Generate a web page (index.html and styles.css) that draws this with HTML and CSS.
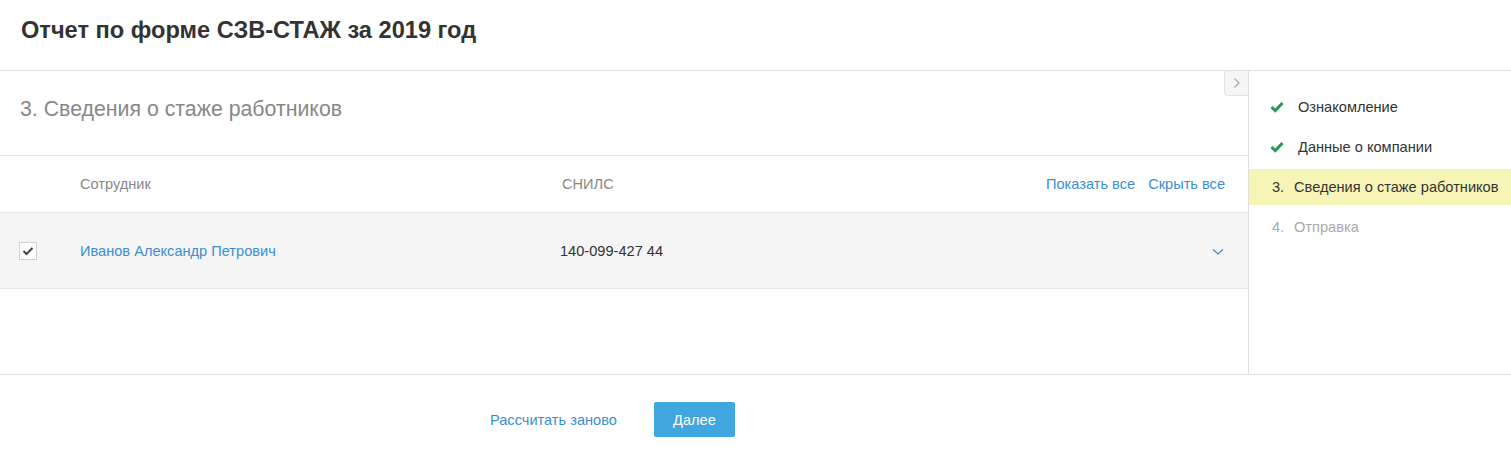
FILE: index.html
```html
<!DOCTYPE html>
<html lang="ru">
<head>
  <meta charset="UTF-8">
  <title>Отчет по форме СЗВ-СТАЖ</title>
  <link rel="stylesheet" href="styles.css">
</head>
<body>
  <header class="page-header">
    <h1>Отчет по форме СЗВ-СТАЖ за 2019 год</h1>
  </header>

  <div class="workspace">
    <main class="content">
      <button class="toggle" type="button" aria-label="Свернуть">
        <svg width="8" height="12" viewBox="0 0 8 12"><path d="M1.5 1.5 L6 6 L1.5 10.5" fill="none" stroke="#aaa" stroke-width="1.3"/></svg>
      </button>

      <h2 class="section-title">3. Сведения о стаже работников</h2>

      <div class="table-head">
        <span class="col-check"></span>
        <span class="col-name">Сотрудник</span>
        <span class="col-snils">СНИЛС</span>
        <span class="col-actions">
          <a href="#">Показать все</a>
          <a href="#">Скрыть все</a>
        </span>
      </div>

      <div class="table-row">
        <span class="col-check">
          <span class="checkbox">
            <svg width="12" height="10" viewBox="0 0 12 10"><path d="M1.5 5 L4.5 8 L10.5 2" fill="none" stroke="#444" stroke-width="2"/></svg>
          </span>
        </span>
        <span class="col-name"><a href="#">Иванов Александр Петрович</a></span>
        <span class="col-snils">140-099-427 44</span>
        <span class="col-actions">
          <svg width="12" height="8" viewBox="0 0 12 8"><path d="M1 1.5 L6 6 L11 1.5" fill="none" stroke="#3b8ed0" stroke-width="1.3"/></svg>
        </span>
      </div>
    </main>

    <aside class="steps">
      <ul>
        <li class="done">
          <svg class="mark" width="14" height="12" viewBox="0 0 14 12"><path d="M1.5 6 L5.3 9.6 L12.5 2" fill="none" stroke="#1f9a4e" stroke-width="3"/></svg>
          <span>Ознакомление</span>
        </li>
        <li class="done">
          <svg class="mark" width="14" height="12" viewBox="0 0 14 12"><path d="M1.5 6 L5.3 9.6 L12.5 2" fill="none" stroke="#1f9a4e" stroke-width="3"/></svg>
          <span>Данные о компании</span>
        </li>
        <li class="current"><span class="num">3.</span><span>Сведения о стаже работников</span></li>
        <li class="todo"><span class="num">4.</span><span>Отправка</span></li>
      </ul>
    </aside>
  </div>

  <footer class="page-footer">
    <a href="#" class="recalc">Рассчитать заново</a>
    <button type="button" class="btn-next">Далее</button>
  </footer>
</body>
</html>
```

FILE: styles.css
```css
body {
  margin: 0;
  font-family: 'Liberation Sans', Arial, sans-serif;
  font-size: 14.6px;
  color: #333;
  background: #fff;
}

a {
  color: #3b8ed0;
  text-decoration: none;
}

.page-header {
  height: 70px;
  border-bottom: 1px solid #dedede;
  display: flex;
  align-items: center;
  padding-left: 21px;
}

.page-header h1 {
  margin: 0 0 10px;
  font-size: 23.6px;
  font-weight: bold;
  color: #333;
}

.workspace {
  display: flex;
  height: 303px;
  border-bottom: 1px solid #dedede;
}

.content {
  position: relative;
  width: 1248px;
}

.toggle {
  position: absolute;
  top: 0;
  right: 0;
  width: 24px;
  height: 25px;
  padding: 0;
  border: 1px solid #e2e2e2;
  border-top: none;
  border-right: none;
  border-radius: 0 0 0 4px;
  background: #f5f5f5;
  display: flex;
  align-items: center;
  justify-content: center;
}

.section-title {
  margin: 0;
  height: 85px;
  box-sizing: border-box;
  padding: 0 0 8px 20px;
  display: flex;
  align-items: center;
  font-size: 21.3px;
  font-weight: normal;
  color: #888;
  border-bottom: 1px solid #e8e8e8;
}

.table-head,
.table-row {
  display: flex;
  align-items: center;
  border-bottom: 1px solid #e8e8e8;
}

.table-head {
  height: 56px;
  color: #888;
  padding-bottom: 1px;
  box-sizing: border-box;
  height: 57px;
}

.table-row {
  height: 75px;
  background: #f5f5f5;
}

.col-check {
  width: 80px;
  padding-left: 19px;
  box-sizing: border-box;
}

.col-name {
  width: 482px;
}

.table-row .col-name {
  width: 480px;
}

.col-snils {
  flex: 1;
}

.col-actions {
  display: flex;
  gap: 13px;
  padding-right: 23px;
}

.table-row .col-actions {
  padding-right: 24px;
  padding-top: 2px;
}

.checkbox {
  width: 16px;
  height: 16px;
  border: 1px solid #d0d0d0;
  background: #fff;
  display: flex;
  align-items: center;
  justify-content: center;
}

.steps {
  flex: 1;
  border-left: 1px solid #dedede;
}

.steps ul {
  list-style: none;
  margin: 0;
  padding: 18px 0 0;
}

.steps li {
  height: 36px;
  margin-bottom: 4px;
  display: flex;
  align-items: center;
  padding-left: 21px;
}

.steps .mark {
  margin-right: 14px;
}

.steps .num {
  width: 22px;
  padding-left: 2px;
}

.steps .current {
  background: #f7f5b6;
}

.steps .todo {
  color: #aaa;
}

.page-footer {
  display: flex;
  align-items: center;
  padding: 27px 0 0 490px;
}

.recalc {
  margin-right: 37px;
}

.btn-next {
  width: 81px;
  height: 35px;
  border: none;
  border-radius: 2px;
  background: #3fa6df;
  color: #fff;
  font-family: inherit;
  font-size: 14.6px;
}
```
